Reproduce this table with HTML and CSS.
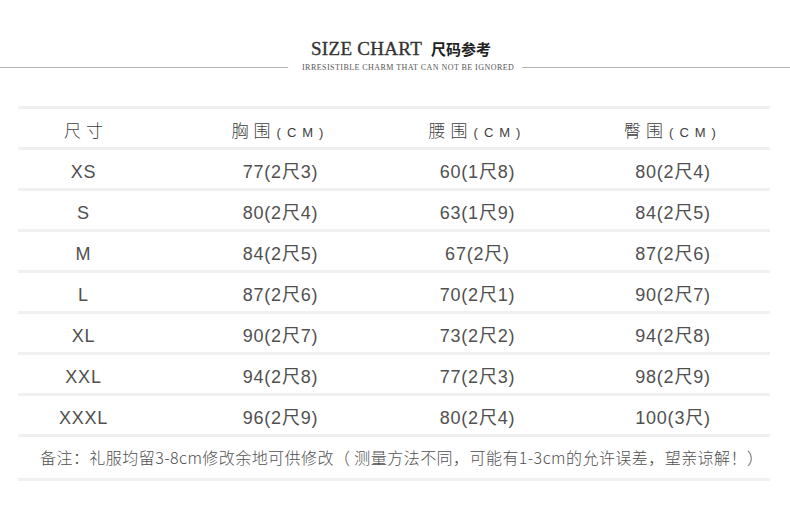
FILE: index.html
```html
<!DOCTYPE html>
<html lang="zh">
<head>
<meta charset="utf-8">
<link rel="stylesheet" href="styles.css">
</head>
<body>
<div class="page">
  <header class="head">
    <h1 class="title"><span class="title-en">SIZE CHART</span> <span class="title-cn">尺码参考</span></h1>
    <div class="subline">
      <span class="rule rule-left"></span>
      <span class="tagline">IRRESISTIBLE CHARM THAT CAN NOT BE IGNORED</span>
      <span class="rule rule-right"></span>
    </div>
  </header>

  <div class="chart">
    <div class="row row-head">
      <div class="cell first"><span class="cn">尺寸</span></div>
      <div class="cell"><span class="cn">胸围</span><span class="unit">(CM)</span></div>
      <div class="cell"><span class="cn">腰围</span><span class="unit">(CM)</span></div>
      <div class="cell"><span class="cn">臀围</span><span class="unit">(CM)</span></div>
    </div>
    <div class="row">
      <div class="cell first">XS</div><div class="cell">77(2尺3)</div><div class="cell">60(1尺8)</div><div class="cell">80(2尺4)</div>
    </div>
    <div class="row">
      <div class="cell first">S</div><div class="cell">80(2尺4)</div><div class="cell">63(1尺9)</div><div class="cell">84(2尺5)</div>
    </div>
    <div class="row">
      <div class="cell first">M</div><div class="cell">84(2尺5)</div><div class="cell">67(2尺)</div><div class="cell">87(2尺6)</div>
    </div>
    <div class="row">
      <div class="cell first">L</div><div class="cell">87(2尺6)</div><div class="cell">70(2尺1)</div><div class="cell">90(2尺7)</div>
    </div>
    <div class="row">
      <div class="cell first">XL</div><div class="cell">90(2尺7)</div><div class="cell">73(2尺2)</div><div class="cell">94(2尺8)</div>
    </div>
    <div class="row">
      <div class="cell first">XXL</div><div class="cell">94(2尺8)</div><div class="cell">77(2尺3)</div><div class="cell">98(2尺9)</div>
    </div>
    <div class="row">
      <div class="cell first">XXXL</div><div class="cell">96(2尺9)</div><div class="cell">80(2尺4)</div><div class="cell">100(3尺)</div>
    </div>
    <div class="note">备注：礼服均留3-8cm修改余地可供修改（ 测量方法不同，可能有1-3cm的允许误差，望亲谅解！）</div>
  </div>
</div>
</body>
</html>
```

FILE: styles.css
```css
html, body {
  margin: 0;
  padding: 0;
  background: #ffffff;
}

.page {
  width: 790px;
  font-family: "Liberation Sans", "Noto Sans CJK SC", sans-serif;
  color: #505050;
}

.head {
  padding-top: 33px;
}

.title {
  margin: 0;
  height: 22px;
  line-height: 22px;
  text-align: center;
  font-weight: normal;
  color: #333;
  padding-left: 12px;
}

.title-en {
  font-family: "Liberation Serif", serif;
  font-size: 19px;
  letter-spacing: 0.3px;
  -webkit-text-stroke: 0.35px #333;
}

.title-cn {
  font-family: "Noto Sans CJK SC", sans-serif;
  font-size: 15px;
  font-weight: bold;
  color: #222;
}

.subline {
  display: flex;
  align-items: center;
  height: 12px;
  margin-top: 6px;
}

.rule {
  height: 1px;
  background: #b4b4b4;
}

.rule-left {
  width: 288px;
  margin-right: 14px;
}

.rule-right {
  flex: 1;
  margin-left: 8px;
}

.tagline {
  font-family: "Liberation Serif", serif;
  font-size: 8px;
  letter-spacing: 0.45px;
  color: #555;
  white-space: nowrap;
}

.chart {
  margin: 33px 20px 0 18px;
  border-bottom: 3px solid #f0f0f0;
}

.row {
  display: grid;
  grid-template-columns: 164px 197px 197px 194px;
  border-top: 3px solid #f0f0f0;
  height: 38px;
}

.cell {
  text-align: center;
  font-size: 18px;
  letter-spacing: 0.8px;
  line-height: 34px;
  padding-top: 5px;
  white-space: nowrap;
}

.cell.first {
  padding-right: 33px;
}

.row-head .cell {
  font-size: 17px;
  letter-spacing: 0;
  color: #404040;
  padding-top: 4px;
}

.cn {
  font-family: "Noto Sans CJK SC", sans-serif;
  font-weight: 300;
  letter-spacing: 5px;
}

.row-head .first .cn {
  letter-spacing: 5px;
  margin-right: -5px;
}

.unit {
  font-size: 13px;
  letter-spacing: 6px;
  margin-left: 1px;
}

.note {
  border-top: 3px solid #f0f0f0;
  height: 41px;
  line-height: 41px;
  padding-left: 22px;
  font-size: 16px;
  letter-spacing: 0.45px;
  white-space: nowrap;
  font-family: "Noto Sans CJK SC", sans-serif;
  font-weight: 300;
}
```
